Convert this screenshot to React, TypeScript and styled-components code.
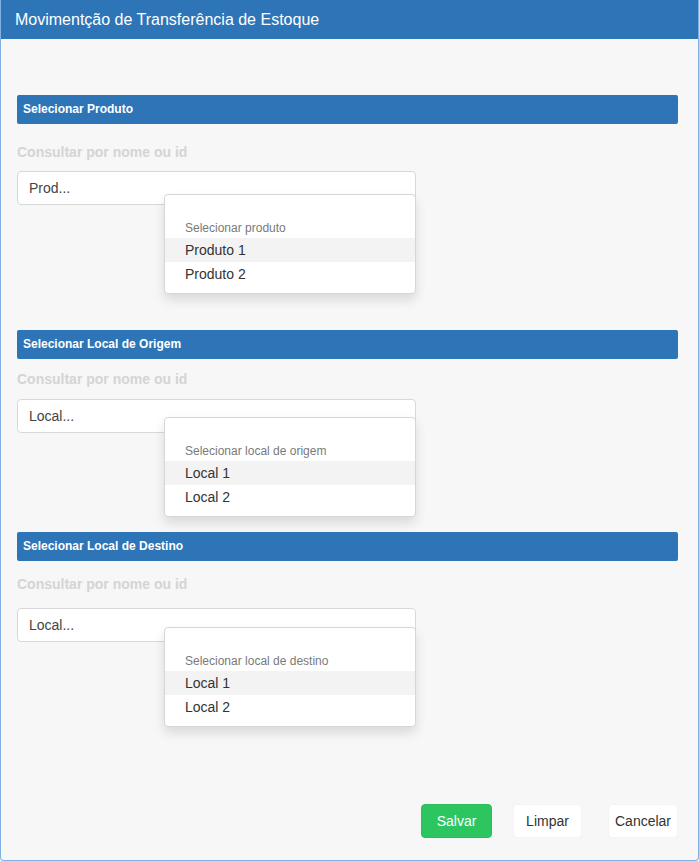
import React from "react";
import styled, { createGlobalStyle } from "styled-components";

const GlobalStyle = createGlobalStyle`
  html, body {
    margin: 0;
    padding: 0;
    background: #ffffff;
    font-family: "Liberation Sans", Arial, sans-serif;
  }
  * { box-sizing: border-box; }
`;

const Modal = styled.div`
  width: 699px;
  height: 861px;
  display: flex;
  flex-direction: column;
  border: 1px solid #7fb1e3;
  border-top: none;
  border-radius: 0 0 4px 4px;
  background: #f7f7f7;
  overflow: hidden;
`;

const TitleBar = styled.div`
  height: 39px;
  margin: 0 -1px;
  background: #2e75b7;
  color: #ffffff;
  font-size: 16px;
  line-height: 39px;
  padding-left: 15px;
  flex-shrink: 0;
`;

const Body = styled.div`
  flex: 1;
  padding: 0 20px 0 16px;
  display: flex;
  flex-direction: column;
`;

const Section = styled.section<{ $top: number }>`
  margin-top: ${(p) => p.$top}px;
  display: flex;
  flex-direction: column;
`;

const SectionHeader = styled.div`
  height: 29px;
  background: #2e75b7;
  border-radius: 2px;
  color: #ffffff;
  font-size: 12px;
  font-weight: bold;
  line-height: 29px;
  padding-left: 6px;
`;

const Label = styled.div<{ $top: number }>`
  margin-top: ${(p) => p.$top}px;
  color: #d4d4d4;
  font-size: 14px;
  font-weight: bold;
  line-height: 20px;
`;

const Field = styled.div<{ $top: number }>`
  position: relative;
  margin-top: ${(p) => p.$top}px;
  width: 399px;
`;

const Input = styled.div`
  height: 34px;
  background: #ffffff;
  border: 1px solid #d8d8d8;
  border-radius: 4px;
  padding-left: 11px;
  font-size: 14px;
  line-height: 32px;
  color: #444;
`;

const Menu = styled.div<{ $offset: number }>`
  position: absolute;
  top: ${(p) => p.$offset}px;
  left: 147px;
  width: 252px;
  background: #ffffff;
  border: 1px solid #d6d6d6;
  border-radius: 4px;
  box-shadow: 0 6px 12px rgba(0, 0, 0, 0.12);
  padding: 23px 0 7px;
  z-index: 2;
`;

const MenuHeader = styled.div`
  padding: 0 20px;
  font-size: 12px;
  line-height: 20px;
  color: #7a7a7a;
`;

const MenuItem = styled.div<{ $active?: boolean }>`
  height: 24px;
  padding: 0 20px;
  font-size: 14px;
  line-height: 24px;
  color: #333;
  background: ${(p) => (p.$active ? "#f3f3f3" : "transparent")};
`;

const Footer = styled.div`
  margin-top: auto;
  margin-bottom: 22px;
  display: flex;
  justify-content: flex-end;
`;

const Button = styled.button<{ $primary?: boolean; $w: number; $gap?: number }>`
  width: ${(p) => p.$w}px;
  height: 34px;
  margin-left: ${(p) => p.$gap ?? 0}px;
  padding: 0;
  border-radius: 4px;
  border: 1px solid ${(p) => (p.$primary ? "#2bbf5c" : "#f3f3f3")};
  background: ${(p) => (p.$primary ? "#2dc55f" : "#ffffff")};
  color: ${(p) => (p.$primary ? "#ffffff" : "#333333")};
  font-family: "Liberation Sans", Arial, sans-serif;
  font-size: 14px;
`;

type Block = {
  title: string;
  top: number;
  labelTop: number;
  fieldTop: number;
  menuOffset: number;
  placeholder: string;
  header: string;
  items: string[];
};

const blocks: Block[] = [
  {
    title: "Selecionar Produto",
    top: 56,
    labelTop: 18,
    fieldTop: 9,
    menuOffset: 23,
    placeholder: "Prod...",
    header: "Selecionar produto",
    items: ["Produto 1", "Produto 2"],
  },
  {
    title: "Selecionar Local de Origem",
    top: 125,
    labelTop: 10,
    fieldTop: 10,
    menuOffset: 18,
    placeholder: "Local...",
    header: "Selecionar local de origem",
    items: ["Local 1", "Local 2"],
  },
  {
    title: "Selecionar Local de Destino",
    top: 99,
    labelTop: 13,
    fieldTop: 14,
    menuOffset: 19,
    placeholder: "Local...",
    header: "Selecionar local de destino",
    items: ["Local 1", "Local 2"],
  },
];

export default function App() {
  return (
    <>
      <GlobalStyle />
      <Modal>
        <TitleBar>Movimentção de Transferência de Estoque</TitleBar>
        <Body>
          {blocks.map((b) => (
            <Section key={b.title} $top={b.top}>
              <SectionHeader>{b.title}</SectionHeader>
              <Label $top={b.labelTop}>Consultar por nome ou id</Label>
              <Field $top={b.fieldTop}>
                <Input>{b.placeholder}</Input>
                <Menu $offset={b.menuOffset}>
                  <MenuHeader>{b.header}</MenuHeader>
                  {b.items.map((it, i) => (
                    <MenuItem key={it} $active={i === 0}>
                      {it}
                    </MenuItem>
                  ))}
                </Menu>
              </Field>
            </Section>
          ))}
          <Footer>
            <Button $primary $w={71}>Salvar</Button>
            <Button $w={69} $gap={21}>Limpar</Button>
            <Button $w={70} $gap={26}>Cancelar</Button>
          </Footer>
        </Body>
      </Modal>
    </>
  );
}
